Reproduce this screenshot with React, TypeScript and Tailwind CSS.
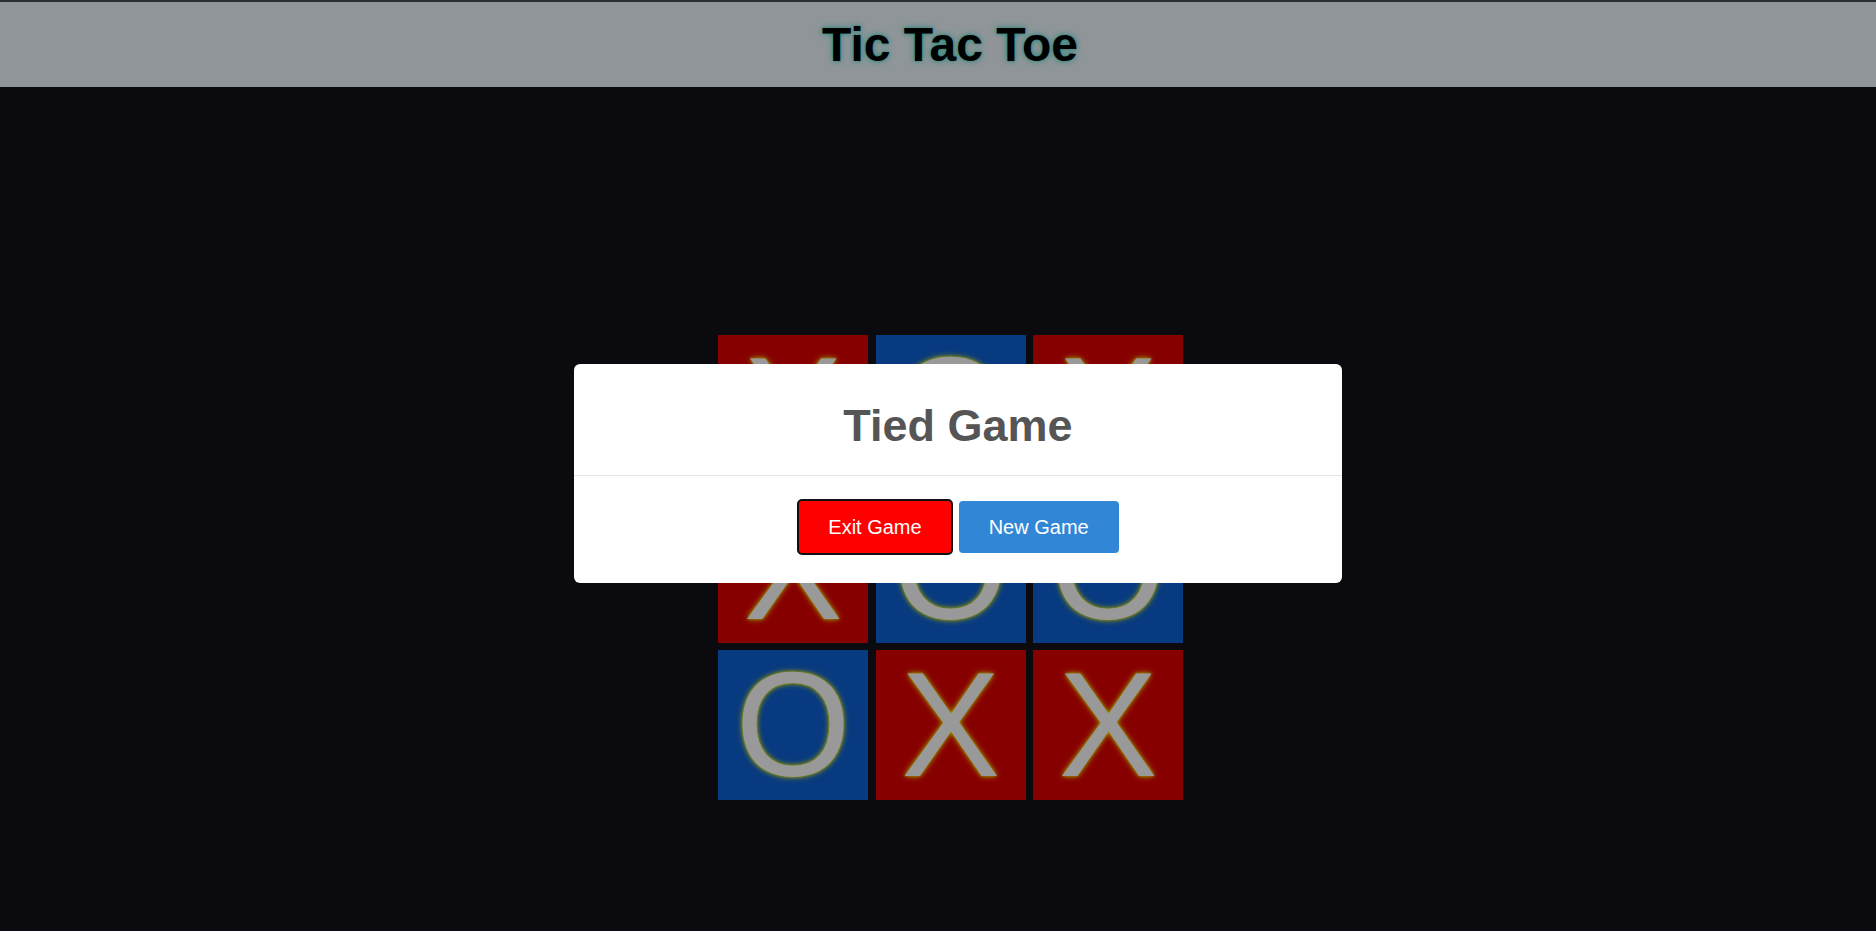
const board: ('X' | 'O')[] = ['X', 'O', 'X', 'X', 'O', 'O', 'O', 'X', 'X']

const Cell = ({ mark }: { mark: 'X' | 'O' }) => (
  <div
    className={`w-[150px] h-[150px] flex items-center justify-center text-white text-[148px] leading-none [text-shadow:0_0_6px_#ffff00,0_0_3px_#ffff00] ${
      mark === 'X' ? 'bg-[#e10000]' : 'bg-[#0d61d5]'
    }`}
  >
    {mark}
  </div>
)

export default function App() {
  return (
    <div className="relative min-h-screen bg-[#11111a] font-['Liberation_Sans',Arial,sans-serif]">
      {/* Header */}
      <header className="h-[87px] border-t-2 border-[#434d57] bg-[#eef8fd] flex items-center justify-center pl-[24px]">
        <h1 className="text-[48px] font-bold text-black leading-none [text-shadow:0_0_6px_#40e0d0,0_0_2px_#40e0d0]">Tic Tac Toe</h1>
      </header>

      {/* Tablero */}
      <main className="flex justify-center pt-[248px] pl-[25px]">
        <div className="grid grid-cols-3 gap-[7.5px]">
          {board.map((mark, i) => (
            <Cell key={i} mark={mark} />
          ))}
        </div>
      </main>

      {/* Modal */}
      <div className="fixed inset-0 bg-black/40">
        <div className="absolute left-[574px] top-[364px] w-[768px] bg-white rounded-[6px]">
          <div className="h-[112px] flex items-center justify-center pt-[12px] border-b border-[#e5e5e5]">
            <h2 className="text-[45px] font-bold text-[#555555] leading-none">Tied Game</h2>
          </div>
          <div className="h-[107px] flex items-center justify-center gap-[6px] pb-[6px]">
            <button className="h-[56px] px-[29px] bg-[#ff0000] text-white text-[20px] border-2 border-[#111111] rounded-[5px]">
              Exit Game
            </button>
            <button className="h-[52px] px-[30px] bg-[#3286d6] text-white text-[20px] rounded-[4px]">
              New Game
            </button>
          </div>
        </div>
      </div>
    </div>
  )
}
